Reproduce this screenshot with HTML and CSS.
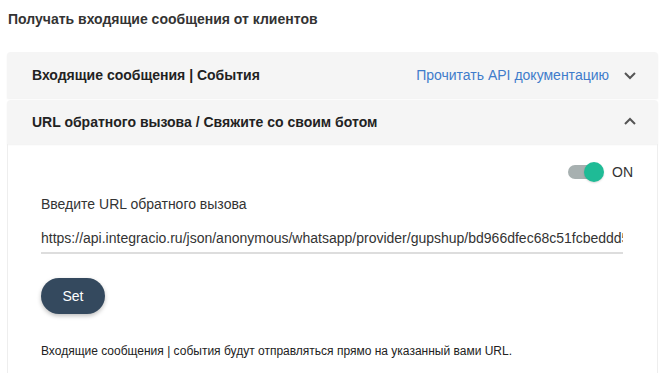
FILE: index.html
```html
<!DOCTYPE html>
<html lang="ru">
<head>
  <meta charset="UTF-8" />
  <title>Входящие сообщения</title>
  <link rel="stylesheet" href="styles.css">
</head>
<body>
  <h4 class="page-title">Получать входящие сообщения от клиентов</h4>

  <div class="accordion">
    <div class="acc-item">
      <div class="acc-head">
        <span class="acc-title">Входящие сообщения | События</span>
        <a class="api-link" href="#">Прочитать API документацию</a>
        <svg class="chev" width="14" height="10" viewBox="0 0 14 10"><path d="M2 3l5 5 5-5" fill="none" stroke="#555" stroke-width="2"/></svg>
      </div>
    </div>

    <div class="acc-item open">
      <div class="acc-head">
        <span class="acc-title">URL обратного вызова / Свяжите со своим ботом</span>
        <svg class="chev" width="14" height="10" viewBox="0 0 14 10"><path d="M2 7l5-5 5 5" fill="none" stroke="#555" stroke-width="2"/></svg>
      </div>
      <div class="acc-body">
        <div class="toggle-row">
          <span class="switch"><span class="knob"></span></span>
          <span class="switch-label">ON</span>
        </div>
        <label class="field-label" for="callback">Введите URL обратного вызова</label>
        <input class="url-input" id="callback" type="text" value="https://api.integracio.ru/json/anonymous/whatsapp/provider/gupshup/bd966dfec68c51fcbeddd5">
        <button class="set-btn">Set</button>
        <p class="note">Входящие сообщения | события будут отправляться прямо на указанный вами URL.</p>
      </div>
    </div>
  </div>
</body>
</html>
```

FILE: styles.css
```css
body {
  font-family: "Liberation Sans", Arial, sans-serif;
  background: #fff;
  color: #333;
  margin: 0;
  padding: 0 7px;
  overflow: hidden;
}
.page-title {
  font-size: 14px;
  font-weight: bold;
  margin: 0;
  padding: 11px 1px 0;
  height: 52px;
  box-sizing: border-box;
  color: #333;
}
.accordion {
  width: 651px;
}
.acc-item {
  margin-bottom: 2px;
}
.acc-head {
  display: flex;
  align-items: center;
  height: 46px;
  padding: 0 21px 0 25px;
  background: #f5f5f5;
  border-radius: 4px 4px 0 0;
  box-shadow: 0 1px 2px rgba(0,0,0,0.06);
}
.acc-title {
  font-size: 14px;
  font-weight: bold;
  color: #222;
  flex: 1;
}
.api-link {
  font-size: 14px;
  color: #3f7ccb;
  text-decoration: none;
  margin-right: 14px;
}
.chev {
  display: block;
}
.open .acc-head {
  height: 44px;
}
.acc-body {
  border-left: 1px solid #eee;
  border-right: 1px solid #eee;
  padding: 17px 34px 0 33px;
  height: 212px;
}
.toggle-row {
  display: flex;
  justify-content: flex-end;
  align-items: center;
  height: 22px;
  margin-right: -10px;
}
.switch {
  position: relative;
  width: 34px;
  height: 14px;
  background: #a7b0b0;
  border-radius: 7px;
  margin-right: 10px;
}
.knob {
  position: absolute;
  right: -2px;
  top: -3px;
  width: 20px;
  height: 20px;
  border-radius: 50%;
  background: #1fbb96;
  box-shadow: 0 1px 2px rgba(0,0,0,0.15);
}
.switch-label {
  font-size: 14px;
  color: #333;
}
.field-label {
  display: block;
  font-size: 14px;
  color: #333;
  margin-top: 13px;
}
.url-input {
  display: block;
  width: 582px;
  box-sizing: border-box;
  border: none;
  border-bottom: 2px solid #ddd;
  padding: 0 0 6px 0;
  margin-top: 18px;
  font-family: "Liberation Sans", Arial, sans-serif;
  font-size: 14px;
  color: #333;
  outline: none;
}
.set-btn {
  display: block;
  margin-top: 24px;
  width: 64px;
  height: 36px;
  border: none;
  border-radius: 18px;
  background: #34495e;
  color: #fff;
  font-family: "Liberation Sans", Arial, sans-serif;
  font-size: 14px;
  box-shadow: 0 2px 4px rgba(0,0,0,0.25);
}
.note {
  font-size: 12px;
  color: #222;
  margin: 30px 0 0;
}
```
